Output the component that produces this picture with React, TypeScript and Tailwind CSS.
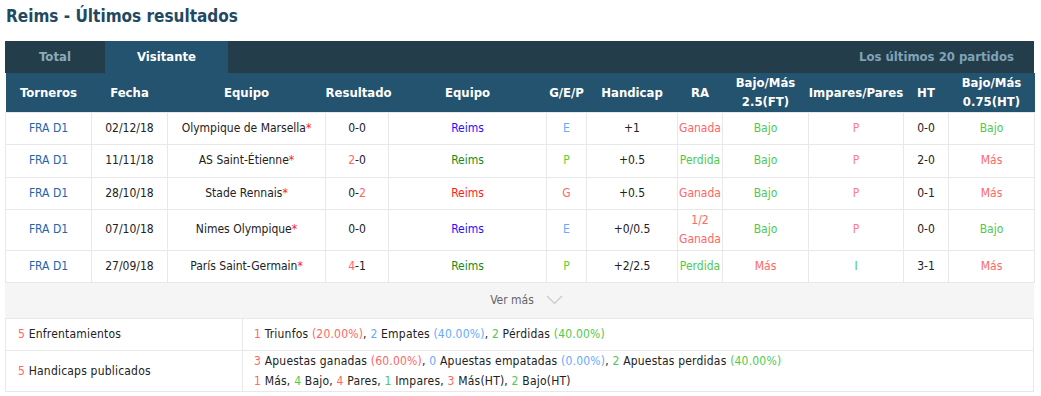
import React from "react";

const RED = "text-[#ff6666]";
const GREEN = "text-[#4fc94f]";
const LBLUE = "text-[#66aaff]";

type Row = {
  date: string;
  home: string;
  score: [string, string, string?];
  reims: string;
  res: string;
  hc: string;
  ra: string;
  ou: string;
  oe: string;
  ht: string;
  ouht: string;
  h: string;
};

const rows: Row[] = [
  { date: "02/12/18", home: "Olympique de Marsella", score: ["0", "0"], reims: "blue", res: "E", hc: "+1", ra: "Ganada", ou: "Bajo", oe: "P", ht: "0-0", ouht: "Bajo", h: "h-[32px]" },
  { date: "11/11/18", home: "AS Saint-Étienne", score: ["2", "0", "home"], reims: "green", res: "P", hc: "+0.5", ra: "Perdida", ou: "Bajo", oe: "P", ht: "2-0", ouht: "Más", h: "h-[33px]" },
  { date: "28/10/18", home: "Stade Rennais", score: ["0", "2", "away"], reims: "red", res: "G", hc: "+0.5", ra: "Ganada", ou: "Bajo", oe: "P", ht: "0-1", ouht: "Más", h: "h-[32px]" },
  { date: "07/10/18", home: "Nimes Olympique", score: ["0", "0"], reims: "blue", res: "E", hc: "+0/0.5", ra: "1/2 Ganada", ou: "Bajo", oe: "P", ht: "0-0", ouht: "Bajo", h: "h-[41px]" },
  { date: "27/09/18", home: "París Saint-Germain", score: ["4", "1", "home"], reims: "green", res: "P", hc: "+2/2.5", ra: "Perdida", ou: "Más", oe: "I", ht: "3-1", ouht: "Más", h: "h-[32px]" },
];

const reimsColor: Record<string, string> = {
  blue: "text-[#2a10ff]",
  green: "text-[#1a8a1a]",
  red: "text-[#ff1a1a]",
};

const resColor: Record<string, string> = {
  E: LBLUE,
  P: "text-[#66cc33]",
  G: RED,
};

function tone(v: string) {
  if (v === "Bajo" || v === "Perdida") return GREEN;
  if (v === "Más" || v.includes("Ganada")) return RED;
  if (v === "P") return "text-[#ff7a8a]";
  if (v === "I") return GREEN;
  return "";
}

const td = "border border-[#e8e8e8] text-center";

export default function App() {
  return (
    <div
      className="bg-white pl-[5px] pr-[7px] pt-[4px] text-[12px] text-[#222] font-stretch-condensed"
      style={{ fontFamily: "Tahoma, 'DejaVu Sans Condensed', 'DejaVu Sans', sans-serif" }}
    >
      <h2 className="h-[24px] pl-[1px] text-[17px] font-bold leading-[24px] text-[#1f4a62]">
        Reims - Últimos resultados
      </h2>

      {/* tabs */}
      <div className="mt-[13px] flex h-[32px] items-center bg-[#233d4b] text-[13px] font-bold">
        <div className="flex h-full w-[100px] items-center justify-center text-[#8aaabb]">Total</div>
        <div className="flex h-full w-[123px] items-center justify-center bg-[#23536e] text-white">Visitante</div>
        <div className="ml-auto pr-[20px] text-[#7fa3b8]">Los últimos 20 partidos</div>
      </div>

      <table className="w-[1029px] table-fixed border-collapse">
        <colgroup>
          {[86, 76, 158, 63, 158, 40, 91, 45, 86, 95, 45, 86].map((w, i) => (
            <col key={i} style={{ width: w }} />
          ))}
        </colgroup>
        <thead>
          <tr className="h-[39px] bg-[#23536e] text-[13px] font-bold leading-[19px] text-white">
            <th>Torneros</th>
            <th>Fecha</th>
            <th>Equipo</th>
            <th>Resultado</th>
            <th>Equipo</th>
            <th>G/E/P</th>
            <th>Handicap</th>
            <th>RA</th>
            <th>
              Bajo/Más
              <br />
              2.5(FT)
            </th>
            <th>Impares/Pares</th>
            <th>HT</th>
            <th>
              Bajo/Más
              <br />
              0.75(HT)
            </th>
          </tr>
        </thead>
        <tbody className="leading-[19px]">
          {rows.map((r, i) => (
            <tr key={i} className={r.h}>
              <td className={`${td} text-[#2266aa]`}>FRA D1</td>
              <td className={td}>{r.date}</td>
              <td className={td}>
                {r.home}
                <span className="text-[#ff2222]">*</span>
              </td>
              <td className={td}>
                <span className={r.score[2] === "home" ? RED : ""}>{r.score[0]}</span>-
                <span className={r.score[2] === "away" ? RED : ""}>{r.score[1]}</span>
              </td>
              <td className={`${td} ${reimsColor[r.reims]}`}>Reims</td>
              <td className={`${td} ${resColor[r.res]}`}>{r.res}</td>
              <td className={td}>{r.hc}</td>
              <td className={`${td} ${tone(r.ra)}`}>
                {r.ra === "1/2 Ganada" ? (
                  <>
                    1/2
                    <br />
                    Ganada
                  </>
                ) : (
                  r.ra
                )}
              </td>
              <td className={`${td} ${tone(r.ou)}`}>{r.ou}</td>
              <td className={`${td} ${tone(r.oe)}`}>{r.oe}</td>
              <td className={td}>{r.ht}</td>
              <td className={`${td} ${tone(r.ouht)}`}>{r.ouht}</td>
            </tr>
          ))}
        </tbody>
      </table>

      {/* ver más */}
      <div className="flex h-[35px] w-[1029px] items-center justify-center gap-[12px] bg-[#f5f5f5] pl-[14px] text-[#666]">
        <span>Ver más</span>
        <svg width="17" height="10" viewBox="0 0 17 10" fill="none">
          <path d="M1 1l7.5 7.5L16 1" stroke="#c8c8c8" strokeWidth="1.2" />
        </svg>
      </div>

      {/* summary */}
      <table className="w-[1029px] table-fixed border-collapse leading-[20px] tracking-[0.2px]">
        <colgroup>
          <col style={{ width: 237 }} />
          <col />
        </colgroup>
        <tbody>
          <tr className="h-[32px]">
            <td className="border border-[#e8e8e8] pl-[12px]">
              <span className={RED}>5</span> Enfrentamientos
            </td>
            <td className="border border-[#e8e8e8] pl-[11px]">
              <span className={RED}>1</span> Triunfos <span className={RED}>(20.00%)</span>,{" "}
              <span className={LBLUE}>2</span> Empates <span className={LBLUE}>(40.00%)</span>,{" "}
              <span className={GREEN}>2</span> Pérdidas <span className={GREEN}>(40.00%)</span>
            </td>
          </tr>
          <tr className="h-[41px]">
            <td className="border border-[#e8e8e8] pl-[12px]">
              <span className={RED}>5</span> Handicaps publicados
            </td>
            <td className="border border-[#e8e8e8] pl-[11px]">
              <div>
                <span className={RED}>3</span> Apuestas ganadas <span className={RED}>(60.00%)</span>,{" "}
                <span className={LBLUE}>0</span> Apuestas empatadas <span className={LBLUE}>(0.00%)</span>,{" "}
                <span className={GREEN}>2</span> Apuestas perdidas <span className={GREEN}>(40.00%)</span>
              </div>
              <div>
                <span className={RED}>1</span> Más, <span className={GREEN}>4</span> Bajo,{" "}
                <span className={RED}>4</span> Pares, <span className={GREEN}>1</span> Impares,{" "}
                <span className={RED}>3</span> Más(HT), <span className={GREEN}>2</span> Bajo(HT)
              </div>
            </td>
          </tr>
        </tbody>
      </table>
    </div>
  );
}
